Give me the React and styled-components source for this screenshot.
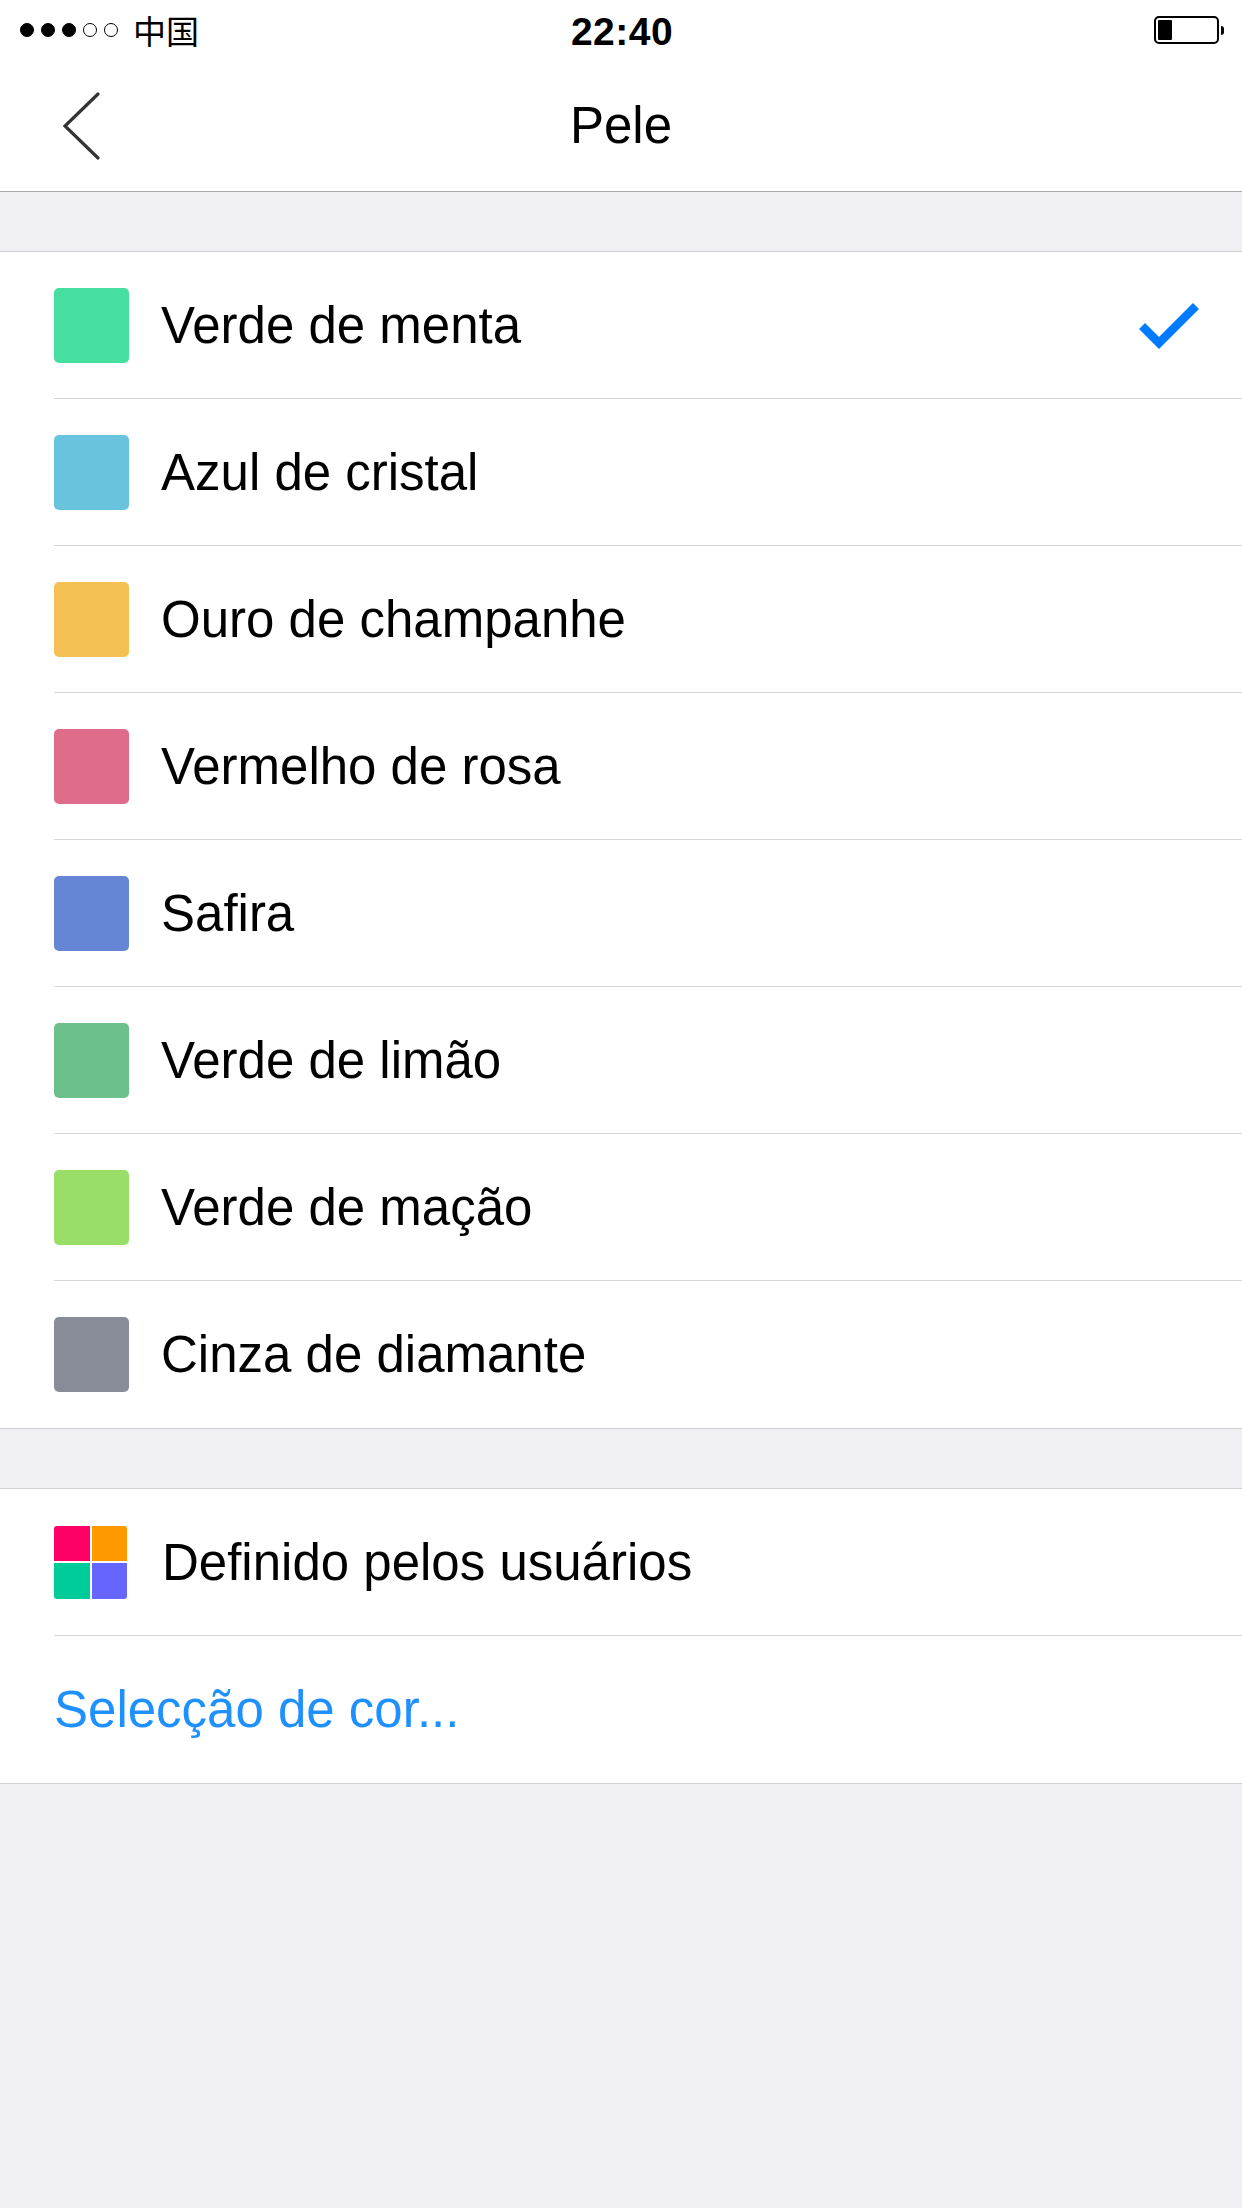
import React from "react";
import styled, { createGlobalStyle } from "styled-components";

const GlobalStyle = createGlobalStyle`
  html, body {
    margin: 0;
    padding: 0;
    background: #efeff4;
  }
  body {
    font-family: "Liberation Sans", Arial, sans-serif;
    -webkit-font-smoothing: antialiased;
  }
`;

const colors = [
  { name: "Verde de menta", color: "#45e0a0", selected: true },
  { name: "Azul de cristal", color: "#6ac3dc" },
  { name: "Ouro de champanhe", color: "#f4bf53" },
  { name: "Vermelho de rosa", color: "#df6c8b" },
  { name: "Safira", color: "#6586d5" },
  { name: "Verde de limão", color: "#6cc08c" },
  { name: "Verde de mação", color: "#98de68" },
  { name: "Cinza de diamante", color: "#878c98" },
];

const App = () => {
  return (
    <>
      <GlobalStyle />
      <Screen>
        <Header>
          <StatusBar>
            <Carrier>
              <Signal>
                <Dot $filled />
                <Dot $filled />
                <Dot $filled />
                <Dot />
                <Dot />
              </Signal>
              <CarrierName>中国</CarrierName>
            </Carrier>
            <Clock>22:40</Clock>
            <Battery>
              <BatteryBody>
                <BatteryLevel />
              </BatteryBody>
              <BatteryNub />
            </Battery>
          </StatusBar>
          <NavBar>
            <BackButton>
              <svg width="40" height="70" viewBox="0 0 40 70">
                <polyline
                  points="36,2 3,34 36,66"
                  fill="none"
                  stroke="#333"
                  strokeWidth="3.2"
                  strokeLinecap="round"
                  strokeLinejoin="miter"
                />
              </svg>
            </BackButton>
            <NavTitle>Pele</NavTitle>
          </NavBar>
        </Header>

        <Group>
          {colors.map((c, i) => (
            <Row key={c.name} $last={i === colors.length - 1}>
              <Swatch $color={c.color} />
              <Label>{c.name}</Label>
              {c.selected && (
                <Check>
                  <svg width="60" height="50" viewBox="0 0 60 50">
                    <polyline
                      points="6,28 20,42 54,8"
                      fill="none"
                      stroke="#007aff"
                      strokeWidth="8.5"
                      strokeLinecap="square"
                      strokeLinejoin="miter"
                    />
                  </svg>
                </Check>
              )}
            </Row>
          ))}
        </Group>

        <Group>
          <Row>
            <Palette>
              <PaletteCell $color="#ff0066" />
              <PaletteCell $color="#ff9900" />
              <PaletteCell $color="#00cc99" />
              <PaletteCell $color="#6666ff" />
            </Palette>
            <Label>Definido pelos usuários</Label>
          </Row>
          <Row $last>
            <LinkLabel>Selecção de cor...</LinkLabel>
          </Row>
        </Group>
      </Screen>
    </>
  );
};

const Screen = styled.div`
  width: 1242px;
  min-height: 2208px;
  background: #efeff4;
  display: flex;
  flex-direction: column;
  gap: 59px;
`;

const Header = styled.div`
  background: #ffffff;
  border-bottom: 1px solid #a9a9ad;
`;

const StatusBar = styled.div`
  height: 60px;
  display: flex;
  align-items: center;
  justify-content: space-between;
  padding: 0 18px 0 20px;
`;

const Carrier = styled.div`
  display: flex;
  align-items: center;
  gap: 15px;
  width: 300px;
`;

const Signal = styled.div`
  display: flex;
  gap: 7px;
`;

const Dot = styled.span`
  width: 14px;
  height: 14px;
  border-radius: 50%;
  box-sizing: border-box;
  border: 1.5px solid #000;
  background: ${(p) => (p.$filled ? "#000" : "transparent")};
`;

const CarrierName = styled.span`
  font-family: "Noto Sans CJK SC", sans-serif;
  font-size: 33px;
  line-height: 1;
  color: #000;
`;

const Clock = styled.span`
  font-family: "Liberation Sans", Arial, sans-serif;
  font-weight: 700;
  font-size: 39px;
  color: #000;
  letter-spacing: 0.5px;
  margin-top: 4px;
`;

const Battery = styled.div`
  width: 300px;
  display: flex;
  align-items: center;
  justify-content: flex-end;
`;

const BatteryBody = styled.div`
  width: 65px;
  height: 28px;
  box-sizing: border-box;
  border: 2px solid #000;
  border-radius: 5px;
  padding: 2px;
  display: flex;
`;

const BatteryLevel = styled.div`
  width: 14px;
  background: #000;
  border-radius: 1px;
`;

const BatteryNub = styled.div`
  width: 3px;
  height: 9px;
  margin-left: 2px;
  background: #000;
  border-radius: 0 3px 3px 0;
`;

const NavBar = styled.div`
  height: 131px;
  display: flex;
  align-items: center;
  justify-content: center;
  position: relative;
`;

const BackButton = styled.div`
  position: absolute;
  left: 62px;
  top: 32px;
  display: flex;
`;

const NavTitle = styled.div`
  font-size: 51px;
  color: #000;
`;

const Group = styled.div`
  background: #ffffff;
  border-top: 1px solid #cfcfd3;
  border-bottom: 1px solid #cfcfd3;
  display: flex;
  flex-direction: column;
`;

const Row = styled.div`
  height: 147px;
  box-sizing: border-box;
  display: flex;
  align-items: center;
  margin-left: 54px;
  padding-right: 43px;
  border-bottom: ${(p) => (p.$last ? "none" : "1px solid #d6d6d9")};
`;

const Swatch = styled.div`
  width: 75px;
  height: 75px;
  border-radius: 5px;
  background: ${(p) => p.$color};
  margin-right: 32px;
`;

const Palette = styled.div`
  width: 73px;
  height: 73px;
  display: grid;
  grid-template-columns: 1fr 1fr;
  grid-template-rows: 1fr 1fr;
  gap: 2px;
  margin-right: 35px;
  border-radius: 3px;
  overflow: hidden;
`;

const PaletteCell = styled.div`
  background: ${(p) => p.$color};
`;

const Label = styled.span`
  flex: 1;
  font-size: 51px;
  color: #000;
`;

const LinkLabel = styled.span`
  font-size: 51px;
  color: #1e90ff;
`;

const Check = styled.div`
  display: flex;
  margin-top: 2px;
`;

export default App;
